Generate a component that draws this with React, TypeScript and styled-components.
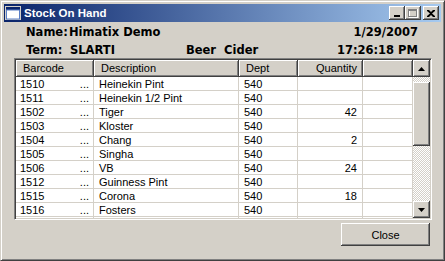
import styled, { createGlobalStyle } from "styled-components";

type Item = {
  barcode: string;
  description: string;
  dept: string;
  quantity?: number;
};

const items: Item[] = [
  { barcode: "1510", description: "Heinekin Pint", dept: "540" },
  { barcode: "1511", description: "Heinekin 1/2 Pint", dept: "540" },
  { barcode: "1502", description: "Tiger", dept: "540", quantity: 42 },
  { barcode: "1503", description: "Kloster", dept: "540" },
  { barcode: "1504", description: "Chang", dept: "540", quantity: 2 },
  { barcode: "1505", description: "Singha", dept: "540" },
  { barcode: "1506", description: "VB", dept: "540", quantity: 24 },
  { barcode: "1512", description: "Guinness Pint", dept: "540" },
  { barcode: "1515", description: "Corona", dept: "540", quantity: 18 },
  { barcode: "1516", description: "Fosters", dept: "540" },
];

const GlobalStyle = createGlobalStyle`
  body {
    margin: 0;
    background: #d4d0c8;
  }
`;

const App = () => {
  return (
    <>
      <GlobalStyle />
      <StyledWindow>
        <StyledTitleBar>
          <StyledTitleIcon width="16" height="14" viewBox="0 0 16 14">
            <rect x="0.5" y="0.5" width="15" height="13" fill="#fff" stroke="#d4d0c8" />
            <rect x="1" y="1" width="14" height="3" fill="#0a246a" />
            <rect x="1.5" y="4" width="13" height="9" fill="#fff" stroke="#5a7ec6" strokeWidth="1" />
          </StyledTitleIcon>
          <StyledTitleText>Stock On Hand</StyledTitleText>
          <StyledCaptionButtons>
            <StyledCaptionButton>
              <svg width="8" height="7" viewBox="0 0 8 7">
                <rect x="1" y="5" width="6" height="2" fill="#000" />
              </svg>
            </StyledCaptionButton>
            <StyledCaptionButton>
              <svg width="10" height="9" viewBox="0 0 10 9">
                <rect x="1.5" y="0.5" width="8" height="8" fill="none" stroke="#fff" />
                <rect x="0.5" y="0.5" width="8" height="7" fill="none" stroke="#808080" />
                <rect x="0" y="0" width="9" height="2" fill="#808080" />
              </svg>
            </StyledCaptionButton>
            <StyledCaptionButton $gap>
              <svg width="8" height="7" viewBox="0 0 8 7">
                <path d="M0 0h2l2 2 2-2h2v1L5 3.5 8 6v1H6L4 5 2 7H0V6l3-2.5L0 1z" fill="#000" />
              </svg>
            </StyledCaptionButton>
          </StyledCaptionButtons>
        </StyledTitleBar>

        <StyledInfo>
          <StyledInfoRow>
            <StyledLabel $width={43}>Name:</StyledLabel>
            <StyledValue>Himatix Demo</StyledValue>
            <StyledRight>1/29/2007</StyledRight>
          </StyledInfoRow>
          <StyledInfoRow>
            <StyledLabel $width={44}>Term:</StyledLabel>
            <StyledValue $width={116}>SLARTI</StyledValue>
            <StyledValue>Beer  Cider</StyledValue>
            <StyledRight>17:26:18 PM</StyledRight>
          </StyledInfoRow>
        </StyledInfo>

        <StyledGridFrame>
          <StyledTable>
            <StyledHeaderRow>
              <StyledHeaderCell>Barcode</StyledHeaderCell>
              <StyledHeaderCell>Description</StyledHeaderCell>
              <StyledHeaderCell>Dept</StyledHeaderCell>
              <StyledHeaderCell $right>Quantity</StyledHeaderCell>
              <StyledHeaderCell />
            </StyledHeaderRow>
            {items.map((item) => (
              <StyledRow key={item.barcode}>
                <StyledBarcodeCell>
                  <span>{item.barcode}</span>
                  <span>...</span>
                </StyledBarcodeCell>
                <StyledCell>{item.description}</StyledCell>
                <StyledCell>{item.dept}</StyledCell>
                <StyledCell $right>{item.quantity ?? ""}</StyledCell>
                <StyledCell />
              </StyledRow>
            ))}
            <StyledRow>
              <StyledBarcodeCell />
              <StyledCell />
              <StyledCell />
              <StyledCell />
              <StyledCell />
            </StyledRow>
          </StyledTable>
          <StyledScrollbar>
            <StyledScrollButton>
              <svg width="7" height="4" viewBox="0 0 7 4">
                <path d="M3.5 0L7 4H0z" fill="#000" />
              </svg>
            </StyledScrollButton>
            <StyledTrack>
              <StyledThumb />
            </StyledTrack>
            <StyledScrollButton>
              <svg width="7" height="4" viewBox="0 0 7 4">
                <path d="M0 0h7L3.5 4z" fill="#000" />
              </svg>
            </StyledScrollButton>
          </StyledScrollbar>
        </StyledGridFrame>

        <StyledFooter>
          <StyledButton>Close</StyledButton>
        </StyledFooter>
      </StyledWindow>
    </>
  );
};

const raised = `
  background: #d4d0c8;
  box-shadow: inset -1px -1px #404040, inset 1px 1px #fff,
    inset -2px -2px #808080, inset 2px 2px #d4d0c8;
`;

const StyledWindow = styled.div`
  box-sizing: border-box;
  width: 445px;
  height: 261px;
  padding: 3px;
  background: #d4d0c8;
  border: 1px solid;
  border-color: #d4d0c8 #404040 #404040 #d4d0c8;
  box-shadow: inset 1px 1px #fff, inset -1px -1px #808080;
  display: flex;
  flex-direction: column;
  font-family: "Liberation Sans", Arial, sans-serif;
  font-size: 11px;
  color: #000;
`;

const StyledTitleBar = styled.div`
  height: 18px;
  display: flex;
  align-items: center;
  padding-left: 1px;
  background: linear-gradient(to right, #0a246a, #a6caf0);
`;

const StyledTitleIcon = styled.svg`
  flex: none;
`;

const StyledTitleText = styled.div`
  margin-left: 3px;
  color: #fff;
  font-weight: bold;
  font-size: 11.5px;
  flex: 1;
`;

const StyledCaptionButtons = styled.div`
  display: flex;
  margin-right: 2px;
`;

const StyledCaptionButton = styled.div<{ $gap?: boolean }>`
  ${raised}
  width: 16px;
  height: 14px;
  margin-left: ${({ $gap }) => ($gap ? "2px" : "0")};
  display: flex;
  align-items: center;
  justify-content: center;
  svg {
    display: block;
  }
`;

const StyledInfo = styled.div`
  display: flex;
  flex-direction: column;
  gap: 2px;
  padding: 2px 23px 0 22px;
  font-family: "DejaVu Sans", Verdana, sans-serif;
  font-weight: bold;
  font-size: 11.5px;
`;

const StyledInfoRow = styled.div`
  display: flex;
  line-height: 16px;
  white-space: pre;
`;

const StyledLabel = styled.span<{ $width: number }>`
  width: ${({ $width }) => $width}px;
`;

const StyledValue = styled.span<{ $width?: number }>`
  width: ${({ $width }) => ($width ? `${$width}px` : "auto")};
`;

const StyledRight = styled.span`
  margin-left: auto;
`;

const StyledGridFrame = styled.div`
  box-sizing: border-box;
  width: 418px;
  height: 162px;
  margin-left: 10px;
  display: flex;
  border: 1px solid;
  border-color: #808080 #fff #fff #808080;
  box-shadow: inset 1px 1px #404040, inset -1px -1px #d4d0c8;
  padding: 1px;
`;

const StyledTable = styled.div`
  flex: 1;
  overflow: hidden;
  background: #fff;
`;

const columns = "78px 145px 59px 65px 50px";

const StyledHeaderRow = styled.div`
  display: grid;
  grid-template-columns: ${columns};
  height: 17px;
`;

const StyledHeaderCell = styled.div<{ $right?: boolean }>`
  background: #d4d0c8;
  box-shadow: inset -1px -1px #404040, inset 1px 1px #fff, inset -2px -2px #808080;
  line-height: 17px;
  padding: 0 6px 0 ${({ $right }) => ($right ? "0" : "7px")};
  text-align: ${({ $right }) => ($right ? "right" : "left")};
  white-space: nowrap;
  overflow: hidden;
`;

const StyledRow = styled.div`
  display: grid;
  grid-template-columns: ${columns};
  height: 14px;
  box-sizing: border-box;
  border-bottom: 1px solid #d4d0c8;
`;

const StyledCell = styled.div<{ $right?: boolean }>`
  border-right: 1px solid #d4d0c8;
  line-height: 13px;
  padding: 1px ${({ $right }) => ($right ? "5px" : "0")} 0
    ${({ $right }) => ($right ? "0" : "5px")};
  text-align: ${({ $right }) => ($right ? "right" : "left")};
  white-space: nowrap;
  overflow: hidden;
`;

const StyledBarcodeCell = styled(StyledCell)`
  display: flex;
  justify-content: space-between;
  padding: 1px 4px 0 4px;
`;

const StyledScrollbar = styled.div`
  width: 17px;
  display: flex;
  flex-direction: column;
`;

const StyledScrollButton = styled.div`
  ${raised}
  width: 17px;
  height: 17px;
  flex: none;
  display: flex;
  align-items: center;
  justify-content: center;
  svg {
    display: block;
  }
`;

const StyledTrack = styled.div`
  flex: 1;
  background: repeating-conic-gradient(#d4d0c8 0 25%, #fff 0 50%) 0 0 / 2px 2px;
`;

const StyledThumb = styled.div`
  ${raised}
  margin-top: 5px;
  height: 64px;
`;

const StyledFooter = styled.div`
  display: flex;
  justify-content: flex-end;
  padding: 3px 11px 0 0;
`;

const StyledButton = styled.button`
  background: #d4d0c8;
  box-shadow: inset -1px -1px #404040, inset 1px 1px #fff,
    inset -2px -2px #808080;
  width: 89px;
  height: 23px;
  border: none;
  padding: 0;
  font-family: "Liberation Sans", Arial, sans-serif;
  font-size: 11px;
  color: #000;
`;

export default App;
